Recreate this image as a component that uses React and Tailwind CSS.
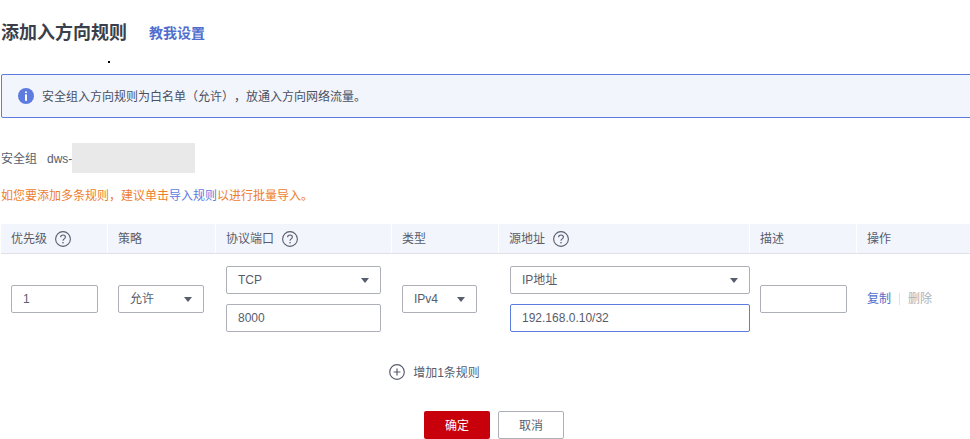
import React from 'react';

const Help = () => (
  <svg width="16" height="16" viewBox="0 0 16 16" fill="none" className="shrink-0 text-[#575d6c]">
    <circle cx="8" cy="8" r="7.4" stroke="currentColor" strokeWidth="1.1" />
    <path d="M5.6 6.2C5.6 4.9 6.7 4 8 4s2.4.9 2.4 2.1c0 1.8-2.4 1.7-2.4 3.6" stroke="currentColor" strokeWidth="1.1" />
    <circle cx="8" cy="11.8" r=".8" fill="currentColor" />
  </svg>
);

const Caret = () => <span className="w-0 h-0 border-x-[4px] border-x-transparent border-t-[5px] border-t-[#575d6c]" />;

const Select = ({ label, className }) => (
  <div className={`h-[28px] border border-[#adb0b8] rounded-[2px] flex items-center justify-between pl-[11px] pr-[11px] bg-white ${className}`}>
    <span>{label}</span>
    <Caret />
  </div>
);

const Input = ({ value, className }) => (
  <div className={`h-[28px] border border-[#adb0b8] rounded-[2px] flex items-center pl-[11px] bg-white ${className}`}>{value}</div>
);

const HeadCell = ({ label, help, className }) => (
  <div className={`h-full bg-[#f2f5fc] flex items-center gap-[8px] pl-[10px] ${className}`}>
    <span>{label}</span>
    {help && <Help />}
  </div>
);

export default function App() {
  return (
    <div className="relative w-[970px] h-[439px] overflow-hidden bg-white text-[12px] text-[#575d6c] [text-spacing-trim:space-all] font-['Liberation_Sans','Noto_Sans_CJK_SC',sans-serif]">
      <span className="absolute left-[108px] top-[61px] w-[2px] h-[2px] bg-black" />

      {/* Title */}
      <div className="h-[74px] flex items-start pl-[1px] pt-[20px]">
        <h1 className="text-[18px] leading-[26px] font-bold text-[#3a3f4b]">添加入方向规则</h1>
        <a className="ml-[22px] text-[14px] leading-[26px] font-bold text-[#526ecc]">教我设置</a>
      </div>

      {/* Alert */}
      <div className="ml-[1px] w-[990px] h-[44px] border border-[#5e7ce0] rounded-[2px] bg-[#f2f5fc] flex items-center pl-[16px]">
        <svg width="16" height="16" viewBox="0 0 16 16" className="shrink-0">
          <circle cx="8" cy="8" r="8" fill="#5e7ce0" />
          <rect x="7" y="3.2" width="2" height="2" rx="1" fill="#fff" />
          <rect x="7" y="6.4" width="2" height="6.4" fill="#fff" />
        </svg>
        <span className="ml-[8px] pt-[2px] text-[#4a5060]">安全组入方向规则为白名单（允许），放通入方向网络流量。</span>
      </div>

      {/* Security group */}
      <div className="mt-[25px] h-[30px] flex items-center pl-[1px]">
        <span className="pt-[1px]">安全组</span>
        <span className="ml-[10px] pt-[1px]">dws-</span>
        <span className="w-[123px] h-[30px] bg-[#e9e9e9]" />
      </div>

      <p className="mt-[15px] pl-[1px] leading-[16px] text-[#ed7d31]">
        如您要添加多条规则，建议单击<span className="text-[#5e7ce0]">导入规则</span>以进行批量导入。
      </p>

      {/* Table */}
      <div className="mt-[20px] ml-[1px] grid grid-cols-[107px_108px_176px_107px_251px_107px_113px] h-[30px] border-b border-[#dfe1e6]">
        <HeadCell label="优先级" help className="border-r border-white" />
        <HeadCell label="策略" className="border-r border-white" />
        <HeadCell label="协议端口" help className="border-r border-white" />
        <HeadCell label="类型" className="border-r border-white" />
        <HeadCell label="源地址" help className="border-r border-white" />
        <HeadCell label="描述" className="border-r border-white" />
        <HeadCell label="操作" />
      </div>

      <div className="ml-[1px] grid grid-cols-[107px_108px_176px_107px_251px_107px_113px] items-center pt-[12px]">
        <div className="pl-[10px]"><Input value="1" className="w-[87px]" /></div>
        <div className="pl-[10px]"><Select label="允许" className="w-[86px]" /></div>
        <div className="pl-[10px] flex flex-col gap-[10px]">
          <Select label="TCP" className="w-[155px]" />
          <Input value="8000" className="w-[155px]" />
        </div>
        <div className="pl-[10px]"><Select label="IPv4" className="w-[75px]" /></div>
        <div className="pl-[11px] flex flex-col gap-[10px]">
          <Select label="IP地址" className="w-[240px]" />
          <Input value="192.168.0.10/32" className="w-[240px] !border-[#5e7ce0]" />
        </div>
        <div className="pl-[10px]"><Input value="" className="w-[87px]" /></div>
        <div className="pl-[10px] flex items-center">
          <a className="text-[#526ecc]">复制</a>
          <span className="mx-[8px] w-px h-[12px] bg-[#dfe1e6]" />
          <span className="text-[#adb0b8]">删除</span>
        </div>
      </div>

      {/* Add rule */}
      <div className="mt-[31px] h-[18px] flex items-center justify-center gap-[8px] w-[869px]">
        <svg width="16" height="16" viewBox="0 0 16 16" fill="none" className="text-[#575d6c]">
          <circle cx="8" cy="8" r="7.3" stroke="currentColor" strokeWidth="1.2" />
          <path d="M4.6 8h6.8M8 4.6v6.8" stroke="currentColor" strokeWidth="1.2" />
        </svg>
        <span className="pt-[1px]">增加1条规则</span>
      </div>

      {/* Buttons */}
      <div className="mt-[30px] flex justify-center gap-[8px] w-[988px]">
        <button className="w-[66px] h-[28px] pt-[1px] rounded-[2px] bg-[#c7000b] text-white text-[12px]">确定</button>
        <button className="w-[66px] h-[28px] pt-[1px] rounded-[2px] border border-[#adb0b8] bg-white text-[12px] text-[#575d6c]">取消</button>
      </div>
    </div>
  );
}
